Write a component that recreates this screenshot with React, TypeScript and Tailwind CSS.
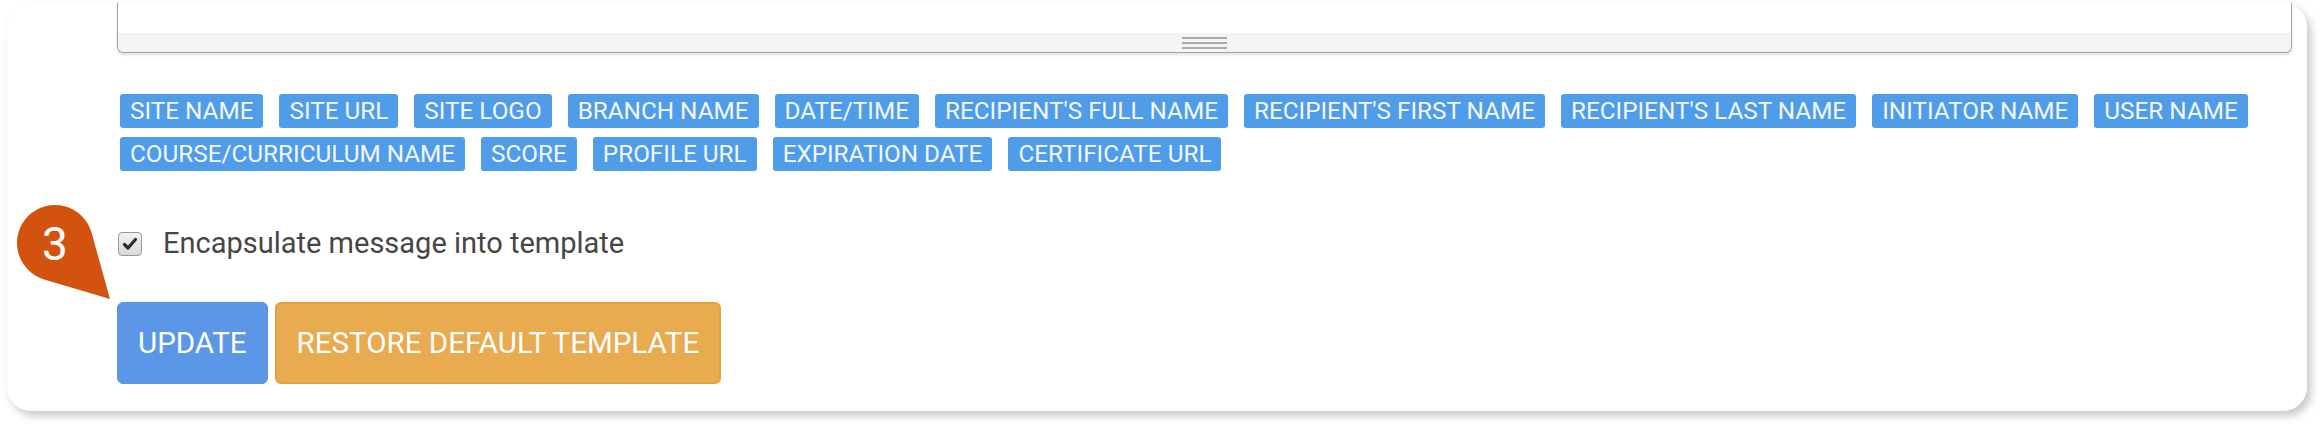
import React from "react";

const tags = [
  "SITE NAME",
  "SITE URL",
  "SITE LOGO",
  "BRANCH NAME",
  "DATE/TIME",
  "RECIPIENT'S FULL NAME",
  "RECIPIENT'S FIRST NAME",
  "RECIPIENT'S LAST NAME",
  "INITIATOR NAME",
  "USER NAME",
  "COURSE/CURRICULUM NAME",
  "SCORE",
  "PROFILE URL",
  "EXPIRATION DATE",
  "CERTIFICATE URL",
];

const StepBadge = () => (
  <svg
    className="absolute left-0 top-[200px]"
    width="120"
    height="110"
    viewBox="0 0 120 110"
  >
    <path
      d="M 91.6 32.8 L 110 99 L 44.2 79.4 A 38 38 0 1 1 91.6 32.8 Z"
      fill="#d4520f"
    />
    <text
      x="55"
      y="60"
      textAnchor="middle"
      fill="#ffffff"
      fontSize="46"
      fontFamily="Roboto, sans-serif"
    >
      3
    </text>
  </svg>
);

const App = () => {
  return (
    <div className="relative h-[431px] w-[2324px] bg-white font-['Roboto',sans-serif]">
      <div className="ml-[7px] pt-[3px]">
        <div className="flex h-[408px] w-[2300px] flex-col rounded-[24px] bg-white pl-[110px] pr-[15px] shadow-[4px_5px_8px_rgba(0,0,0,0.22)]">
          {/* editor (cut off at top) */}
          <div className="flex h-[50px] flex-col rounded-b-[6px] border border-t-0 border-[#a3a3a3] shadow-[0_2px_3px_rgba(0,0,0,0.12)]">
            <div className="flex-1 bg-white" />
            <div className="flex h-[19px] items-center justify-center rounded-b-[6px] bg-[#f4f4f4]">
              <div className="flex w-[45px] flex-col gap-[3px]">
                <div className="h-[2px] bg-[#aaaaaa]" />
                <div className="h-[2px] bg-[#aaaaaa]" />
                <div className="h-[2px] bg-[#aaaaaa]" />
              </div>
            </div>
          </div>

          <div className="mt-[41px] flex flex-wrap gap-x-4 gap-y-[9px] pl-[3px]">
            {tags.map((t) => (
              <span
                key={t}
                className="flex h-[34px] items-center rounded-[3px] bg-[#4f9ce9] px-[10px] text-[24.3px] leading-none text-[#f4f7ff]"
              >
                {t}
              </span>
            ))}
          </div>

          <label className="mt-[58px] flex items-center gap-[21px] pl-[1px]">
            <span className="flex h-[24px] w-[24px] items-center justify-center rounded-[4px] border border-[#9a9a9a] bg-gradient-to-b from-[#f2f2f2] to-[#d9d9d9]">
              <svg width="16" height="16" viewBox="0 0 16 16">
                <path
                  d="M2.5 8.5 L6 12 L13.5 3.5"
                  fill="none"
                  stroke="#2b2b2b"
                  strokeWidth="3.2"
                  strokeLinecap="round"
                  strokeLinejoin="round"
                />
              </svg>
            </span>
            <span className="text-[29px] leading-none text-[#464646]">
              Encapsulate message into template
            </span>
          </label>

          <div className="mt-[44px] flex gap-[7px]">
            <button className="h-[82px] rounded-[6px] border border-[#5a93e2] bg-[#5c96e6] px-[20px] text-[29.5px] text-white">
              UPDATE
            </button>
            <button className="h-[82px] rounded-[6px] border-2 border-[#e59f3c] bg-[#e9ab50] px-[20px] text-[29.5px] text-white">
              RESTORE DEFAULT TEMPLATE
            </button>
          </div>
        </div>
      </div>
      <StepBadge />
    </div>
  );
};

export default App;
